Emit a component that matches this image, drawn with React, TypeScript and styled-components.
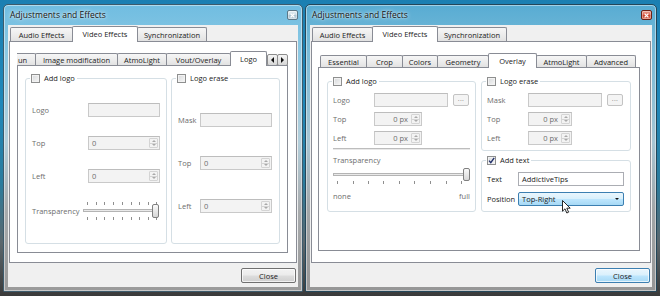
import React from "react";
import styled, { createGlobalStyle, css } from "styled-components";

const GlobalStyle = createGlobalStyle`
  html, body {
    margin: 0;
    padding: 0;
  }
  body {
    width: 660px;
    height: 296px;
    overflow: hidden;
    font-family: "Open Sans", "Noto Sans", sans-serif;
    font-size: 7.5px;
    line-height: 10px;
    color: #1b1b1b;
    background: linear-gradient(180deg, #1b7fb2 0%, #2088ba 35%, #2b7c9d 62%, #5b676d 82%, #3a3a3a 100%);
  }
`;

const Desktop = styled.div`
  display: flex;
  align-items: flex-start;
  gap: 2px;
  padding: 4px 0 0 3px;
`;

/* ---------- window chrome ---------- */

const Frame = styled.div<{ $width: number; $active?: boolean }>`
  box-sizing: border-box;
  width: ${(p) => p.$width}px;
  height: 288px;
  display: flex;
  flex-direction: column;
  padding: 0 4px 4px;
  border: 1px solid ${(p) => (p.$active ? "#24475a" : "#3d5b6c")};
  border-radius: 5px 5px 1px 1px;
  background: ${(p) =>
    p.$active
      ? "linear-gradient(180deg, #58acd3 0%, #78bbd8 16%, #a7c5d3 48%, #a2a6a8 72%, #969696 100%)"
      : "linear-gradient(180deg, #70bde1 0%, #8bc8e3 16%, #b3cfdb 48%, #a8abad 72%, #9a9a9a 100%)"};
  box-shadow: inset 0 0 0 1px rgba(255, 255, 255, 0.45);
`;

const TitleBar = styled.div`
  height: 20px;
  display: flex;
  align-items: center;
  justify-content: space-between;
  padding: 0 0 0 2px;
`;

const Title = styled.span`
  font-size: 8.5px;
  color: #121212;
  text-shadow: 0 0 5px rgba(255, 255, 255, 0.9), 0 0 2px rgba(255, 255, 255, 0.8);
`;

const CaptionClose = styled.div<{ $active?: boolean }>`
  box-sizing: border-box;
  width: 11px;
  height: 10px;
  display: flex;
  align-items: center;
  justify-content: center;
  border: 1px solid ${(p) => (p.$active ? "#6b2016" : "#5b7888")};
  border-radius: 2px;
  background: ${(p) =>
    p.$active
      ? "linear-gradient(180deg, #eba497 0%, #d9604c 48%, #c7402b 52%, #d9735c 100%)"
      : "linear-gradient(180deg, #e6f0f5 0%, #c3d7e2 48%, #aac4d2 52%, #bfd3de 100%)"};
  box-shadow: inset 0 0 0 1px rgba(255, 255, 255, 0.35);
`;

const Client = styled.div`
  flex: 1;
  min-height: 0;
  display: flex;
  flex-direction: column;
  padding: 1px 1px 0;
  background: #f0f0f0;
`;

const Footer = styled.div`
  height: 24px;
  display: flex;
  justify-content: flex-end;
  align-items: flex-start;
  padding: 5px 1px 0 0;
  box-sizing: border-box;
`;

const PushButton = styled.button<{ $default?: boolean }>`
  box-sizing: border-box;
  width: 55px;
  height: 15px;
  padding: 0;
  font: inherit;
  color: #1b1b1b;
  border: 1px solid ${(p) => (p.$default ? "#3c7fb1" : "#707070")};
  border-radius: 2px;
  background: ${(p) =>
    p.$default
      ? "linear-gradient(180deg, #eaf6fd 0%, #d9f0fc 49%, #bee6fd 51%, #a7d9f5 100%)"
      : "linear-gradient(180deg, #f2f2f2 0%, #ebebeb 49%, #dddddd 51%, #cfcfcf 100%)"};
  box-shadow: inset 0 0 0 1px rgba(255, 255, 255, 0.7);
`;

/* ---------- tabs ---------- */

const TabBar = styled.div<{ $h: number; $inset: number }>`
  display: flex;
  align-items: flex-end;
  height: ${(p) => p.$h}px;
  padding-left: ${(p) => p.$inset}px;
`;

const Tab = styled.div<{ $w: number; $h: number; $selected?: boolean; $clipped?: boolean }>`
  box-sizing: border-box;
  width: ${(p) => p.$w}px;
  height: ${(p) => p.$h}px;
  flex: none;
  display: flex;
  align-items: center;
  justify-content: center;
  white-space: nowrap;
  overflow: hidden;
  border: 1px solid #898c95;
  border-bottom: none;
  border-radius: 2px 2px 0 0;
  background: linear-gradient(180deg, #f6f6f6 0%, #ececec 50%, #e0e0e0 100%);
  &:not(:first-child) {
    margin-left: -1px;
  }
  ${(p) =>
    p.$selected &&
    css`
      position: relative;
      z-index: 1;
      background: #fff;
      padding-bottom: 1px;
    `}
  ${(p) =>
    p.$clipped &&
    css`
      border-left: none;
      border-radius: 0 2px 0 0;
      justify-content: flex-start;
      padding-left: 1px;
    `}
`;

const ScrollButtons = styled.div`
  display: flex;
  flex: none;
`;

const ScrollButton = styled.div`
  box-sizing: border-box;
  width: 11px;
  height: 12px;
  display: flex;
  align-items: center;
  justify-content: center;
  border: 1px solid #8c8c8c;
  border-radius: 2px;
  background: linear-gradient(180deg, #f5f5f5 0%, #e6e6e6 50%, #d6d6d6 100%);
  & + & {
    margin-left: -1px;
  }
`;

const Tri = styled.span<{ $dir: "up" | "down" | "left" | "right"; $size: number; $color: string }>`
  width: 0;
  height: 0;
  ${({ $dir, $size, $color }) => {
    const t = `${$size}px solid transparent`;
    const c = `${$size}px solid ${$color}`;
    if ($dir === "up") return `border-left: ${t}; border-right: ${t}; border-bottom: ${c};`;
    if ($dir === "down") return `border-left: ${t}; border-right: ${t}; border-top: ${c};`;
    if ($dir === "left") return `border-top: ${t}; border-bottom: ${t}; border-right: ${c};`;
    return `border-top: ${t}; border-bottom: ${t}; border-left: ${c};`;
  }}
`;

const Pane = styled.div<{ $pad: string }>`
  flex: 1;
  min-height: 0;
  display: flex;
  flex-direction: column;
  margin-top: -1px;
  padding: ${(p) => p.$pad};
  background: #fff;
  border: 1px solid #898c95;
`;

const InnerPane = styled.div<{ $pad: string; $gap: number }>`
  flex: 1;
  display: flex;
  align-items: flex-start;
  gap: ${(p) => p.$gap}px;
  margin-top: -1px;
  padding: ${(p) => p.$pad};
  background: #fff;
  border: 1px solid #898c95;
`;

/* ---------- group boxes and fields ---------- */

const GroupColumn = styled.div`
  display: flex;
  flex-direction: column;
  gap: 9px;
`;

const Group = styled.div<{ $w: number; $h: number }>`
  position: relative;
  box-sizing: border-box;
  width: ${(p) => p.$w}px;
  height: ${(p) => p.$h}px;
  border: 1px solid #d5dfe5;
  border-radius: 3px;
`;

const GroupTitle = styled.div`
  position: absolute;
  top: -6px;
  left: 4px;
  height: 10px;
  display: flex;
  align-items: center;
  gap: 4px;
  padding: 0 2px 0 1px;
  background: #fff;
  white-space: nowrap;
`;

const CheckBox = styled.span`
  box-sizing: border-box;
  width: 9px;
  height: 9px;
  display: flex;
  align-items: center;
  justify-content: center;
  border: 1px solid #8e8f8f;
  background: linear-gradient(135deg, #d6d8da 0%, #f7f7f7 100%);
  box-shadow: inset 0 0 0 1px #f2f2f2;
`;

const FormGrid = styled.div<{ $cols: string; $gap: number; $top: number; $left: number }>`
  display: grid;
  grid-template-columns: ${(p) => p.$cols};
  row-gap: ${(p) => p.$gap}px;
  align-items: center;
  padding: ${(p) => p.$top}px 0 0 ${(p) => p.$left}px;
`;

const FieldLabel = styled.span<{ $disabled?: boolean }>`
  color: ${(p) => (p.$disabled ? "#6d6d6d" : "#1b1b1b")};
  white-space: nowrap;
`;

const FieldRow = styled.div`
  display: flex;
  align-items: center;
  gap: 5px;
`;

const LineEdit = styled.div<{ $w: number; $h: number; $disabled?: boolean }>`
  box-sizing: border-box;
  width: ${(p) => p.$w}px;
  height: ${(p) => p.$h}px;
  display: flex;
  align-items: center;
  padding-left: 3px;
  border: 1px solid ${(p) => (p.$disabled ? "#c9c9c9" : "#abadb3")};
  border-top-color: ${(p) => (p.$disabled ? "#bdbdbd" : "#abadb3")};
  background: ${(p) => (p.$disabled ? "#f3f3f3" : "#fff")};
  color: ${(p) => (p.$disabled ? "#6d6d6d" : "#1b1b1b")};
  white-space: nowrap;
`;

const BrowseButton = styled.div`
  box-sizing: border-box;
  width: 16px;
  height: 12px;
  display: flex;
  align-items: center;
  justify-content: center;
  border: 1px solid #c3c3c3;
  border-radius: 2px;
  background: #f4f4f4;
  color: #8a8a8a;
  font-size: 7px;
  letter-spacing: 0.3px;
  padding-bottom: 2px;
`;

const SpinFrame = styled.div<{ $w: number; $h: number }>`
  box-sizing: border-box;
  width: ${(p) => p.$w}px;
  height: ${(p) => p.$h}px;
  display: flex;
  border: 1px solid #c9c9c9;
  border-top-color: #bdbdbd;
  background: #f3f3f3;
  color: #6d6d6d;
`;

const SpinText = styled.span<{ $right?: boolean }>`
  flex: 1;
  display: flex;
  align-items: center;
  justify-content: ${(p) => (p.$right ? "flex-end" : "flex-start")};
  padding: 0 3px;
  white-space: nowrap;
`;

const SpinButtons = styled.div`
  box-sizing: border-box;
  width: 9px;
  margin: 1px 1px 1px 0;
  display: flex;
  flex-direction: column;
  border: 1px solid #d4d4d4;
  border-radius: 1px;
`;

const SpinHalf = styled.div`
  flex: 1;
  display: flex;
  align-items: center;
  justify-content: center;
  & + & {
    border-top: 1px solid #d4d4d4;
  }
`;

const Combo = styled.div`
  position: relative;
  box-sizing: border-box;
  width: 106px;
  height: 14px;
  display: flex;
  align-items: center;
  justify-content: space-between;
  padding: 0 4px 0 3px;
  border: 1px solid #3c7fb1;
  border-radius: 2px;
  background: linear-gradient(180deg, #eaf6fd 0%, #d9f0fc 49%, #bee6fd 51%, #a7d9f5 100%);
`;

const Cursor = styled.svg`
  position: absolute;
  left: 43px;
  top: 7px;
  z-index: 2;
`;

const Separator = styled.div`
  width: 137px;
  margin: 3px 0 0 5px;
  border-top: 1px solid #bdbdbd;
  border-bottom: 1px solid #e9e9e9;
`;

const Caption = styled.div`
  margin: 5px 0 0 5px;
  height: 10px;
  color: #6d6d6d;
`;

const SliderBox = styled.div<{ $shift: number; $top?: number }>`
  margin-left: ${(p) => p.$shift}px;
  margin-top: ${(p) => p.$top ?? 0}px;
  height: 18px;
  svg {
    display: block;
  }
`;

const ScaleLabels = styled.div`
  width: 137px;
  height: 10px;
  margin: 7px 0 0 5px;
  display: flex;
  justify-content: space-between;
  color: #6d6d6d;
`;

/* ---------- small drawings ---------- */

function CloseX() {
  return (
    <svg width="5" height="5" viewBox="0 0 5 5">
      <path d="M0.6 0.6L4.4 4.4M4.4 0.6L0.6 4.4" stroke="#fff" strokeWidth="1.3" />
    </svg>
  );
}

function Check({ checked }: { checked?: boolean }) {
  return (
    <CheckBox>
      {checked && (
        <svg width="7" height="7" viewBox="0 0 7 7">
          <path d="M1 3.6L2.8 5.6L6.2 0.8" fill="none" stroke="#22306a" strokeWidth="1.4" />
        </svg>
      )}
    </CheckBox>
  );
}

function Spin({ w, h, value, right }: { w: number; h: number; value: string; right?: boolean }) {
  return (
    <SpinFrame $w={w} $h={h}>
      <SpinText $right={right}>{value}</SpinText>
      <SpinButtons>
        <SpinHalf>
          <Tri $dir="up" $size={2} $color="#a9a9a9" />
        </SpinHalf>
        <SpinHalf>
          <Tri $dir="down" $size={2} $color="#a9a9a9" />
        </SpinHalf>
      </SpinButtons>
    </SpinFrame>
  );
}

function Slider({ width, ticks, above, id }: { width: number; ticks: number[]; above?: boolean; id: string }) {
  const hx = width - 7;
  return (
    <svg width={width} height={18} viewBox={`0 0 ${width} 18`}>
      <defs>
        <linearGradient id={id} x1="0" y1="0" x2="0" y2="1">
          <stop offset="0" stopColor="#fbfbfb" />
          <stop offset="1" stopColor="#d5d5d5" />
        </linearGradient>
      </defs>
      {above &&
        ticks.map((x) => <line key={`a${x}`} x1={x + 0.5} x2={x + 0.5} y1={0} y2={3} stroke="#8f8f8f" />)}
      {ticks.map((x) => (
        <line key={`b${x}`} x1={x + 0.5} x2={x + 0.5} y1={15} y2={18} stroke="#8f8f8f" />
      ))}
      <rect x={0.5} y={7.5} width={width - 1} height={2} fill="#e9e9e9" stroke="#b4b4b4" />
      <rect x={hx + 0.5} y={2.5} width={6} height={above ? 13 : 12} rx={1.5} fill={`url(#${id})`} stroke="#7f7f7f" />
    </svg>
  );
}

/* ---------- window ---------- */

const OUTER_TABS = ["Audio Effects", "Video Effects", "Synchronization"];

type WindowProps = {
  width: number;
  active?: boolean;
  tabWidths: number[];
  panePad: string;
  children: React.ReactNode;
};

function EffectsWindow({ width, active, tabWidths, panePad, children }: WindowProps) {
  return (
    <Frame $width={width} $active={active}>
      <TitleBar>
        <Title>Adjustments and Effects</Title>
        <CaptionClose $active={active}>
          <CloseX />
        </CaptionClose>
      </TitleBar>
      <Client>
        <TabBar $h={16} $inset={1}>
          {OUTER_TABS.map((t, i) => (
            <Tab key={t} $w={tabWidths[i]} $h={i === 1 ? 16 : 15} $selected={i === 1}>
              {t}
            </Tab>
          ))}
        </TabBar>
        <Pane $pad={panePad}>{children}</Pane>
        <Footer>
          <PushButton $default={active}>Close</PushButton>
        </Footer>
      </Client>
    </Frame>
  );
}

function LogoPage() {
  return (
    <>
      <TabBar $h={15} $inset={0}>
        <Tab $w={19} $h={13} $clipped>
          un
        </Tab>
        <Tab $w={83} $h={13}>
          Image modification
        </Tab>
        <Tab $w={50} $h={13}>
          AtmoLight
        </Tab>
        <Tab $w={65} $h={13}>
          Vout/Overlay
        </Tab>
        <Tab $w={37} $h={15} $selected>
          Logo
        </Tab>
        <ScrollButtons>
          <ScrollButton>
            <Tri $dir="left" $size={3} $color="#111" />
          </ScrollButton>
          <ScrollButton>
            <Tri $dir="right" $size={3} $color="#111" />
          </ScrollButton>
        </ScrollButtons>
      </TabBar>
      <InnerPane $pad="12px 7px 8px" $gap={4}>
        <Group $w={142} $h={166}>
          <GroupTitle>
            <Check />
            Add logo
          </GroupTitle>
          <FormGrid $cols="56px 72px" $gap={19} $top={24} $left={6}>
            <FieldLabel $disabled>Logo</FieldLabel>
            <LineEdit $w={72} $h={14} $disabled />
            <FieldLabel $disabled>Top</FieldLabel>
            <Spin w={72} h={14} value="0" />
            <FieldLabel $disabled>Left</FieldLabel>
            <Spin w={72} h={14} value="0" />
            <FieldLabel $disabled>Transparency</FieldLabel>
            <SliderBox $shift={-5}>
              <Slider width={76} ticks={[4, 13, 21, 30, 39, 48, 56, 65, 73]} above id="sl-left" />
            </SliderBox>
          </FormGrid>
        </Group>
        <Group $w={109} $h={166}>
          <GroupTitle>
            <Check />
            Logo erase
          </GroupTitle>
          <FormGrid $cols="22px 72px" $gap={29} $top={34} $left={6}>
            <FieldLabel $disabled>Mask</FieldLabel>
            <LineEdit $w={72} $h={14} $disabled />
            <FieldLabel $disabled>Top</FieldLabel>
            <Spin w={72} h={14} value="0" />
            <FieldLabel $disabled>Left</FieldLabel>
            <Spin w={72} h={14} value="0" />
          </FormGrid>
        </Group>
      </InnerPane>
    </>
  );
}

const VIDEO_TABS: [string, number][] = [
  ["Essential", 47],
  ["Crop", 37],
  ["Colors", 36],
  ["Geometry", 52],
  ["Overlay", 49],
  ["AtmoLight", 51],
  ["Advanced", 50],
];

function OverlayPage() {
  return (
    <>
      <TabBar $h={15} $inset={2}>
        {VIDEO_TABS.map(([label, w]) => (
          <Tab key={label} $w={w} $h={label === "Overlay" ? 15 : 13} $selected={label === "Overlay"}>
            {label}
          </Tab>
        ))}
      </TabBar>
      <InnerPane $pad="13px 8px" $gap={5}>
        <Group $w={150} $h={131}>
          <GroupTitle>
            <Check />
            Add logo
          </GroupTitle>
          <FormGrid $cols="41px auto" $gap={5} $top={11} $left={5}>
            <FieldLabel $disabled>Logo</FieldLabel>
            <FieldRow>
              <LineEdit $w={74} $h={14} $disabled />
              <BrowseButton>...</BrowseButton>
            </FieldRow>
            <FieldLabel $disabled>Top</FieldLabel>
            <Spin w={48} h={14} value="0 px" right />
            <FieldLabel $disabled>Left</FieldLabel>
            <Spin w={48} h={14} value="0 px" right />
          </FormGrid>
          <Separator />
          <Caption>Transparency</Caption>
          <SliderBox $shift={5} $top={1}>
            <Slider width={137} ticks={[4, 20, 35, 50, 66, 81, 97, 113, 128]} id="sl-right" />
          </SliderBox>
          <ScaleLabels>
            <span>none</span>
            <span>full</span>
          </ScaleLabels>
        </Group>
        <GroupColumn>
          <Group $w={150} $h={70}>
            <GroupTitle>
              <Check />
              Logo erase
            </GroupTitle>
            <FormGrid $cols="41px auto" $gap={5} $top={11} $left={5}>
              <FieldLabel $disabled>Mask</FieldLabel>
              <FieldRow>
                <LineEdit $w={74} $h={14} $disabled />
                <BrowseButton>...</BrowseButton>
              </FieldRow>
              <FieldLabel $disabled>Top</FieldLabel>
              <Spin w={44} h={14} value="0 px" right />
              <FieldLabel $disabled>Left</FieldLabel>
              <Spin w={44} h={14} value="0 px" right />
            </FormGrid>
          </Group>
          <Group $w={150} $h={52}>
            <GroupTitle>
              <Check checked />
              Add text
            </GroupTitle>
            <FormGrid $cols="31px auto" $gap={6} $top={11} $left={5}>
              <FieldLabel>Text</FieldLabel>
              <LineEdit $w={106} $h={14}>
                AddictiveTips
              </LineEdit>
              <FieldLabel>Position</FieldLabel>
              <Combo>
                <span>Top-Right</span>
                <Tri $dir="down" $size={2.5} $color="#111" />
                <Cursor width="9" height="14" viewBox="0 0 9 14">
                  <path
                    d="M0.5 0.5V11.2L3 8.8L4.8 13L6.6 12.2L4.8 8.2H8.2Z"
                    fill="#fff"
                    stroke="#111"
                    strokeWidth="0.9"
                    strokeLinejoin="round"
                  />
                </Cursor>
              </Combo>
            </FormGrid>
          </Group>
        </GroupColumn>
      </InnerPane>
    </>
  );
}

export default function App() {
  return (
    <>
      <GlobalStyle />
      <Desktop>
        <EffectsWindow width={300} tabWidths={[63, 66, 70]} panePad="9px 8px 10px 7px">
          <LogoPage />
        </EffectsWindow>
        <EffectsWindow width={352} active tabWidths={[61, 66, 70]} panePad="11px 10px 11px 6px">
          <OverlayPage />
        </EffectsWindow>
      </Desktop>
    </>
  );
}
